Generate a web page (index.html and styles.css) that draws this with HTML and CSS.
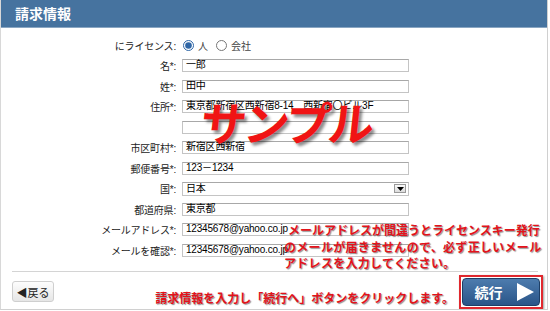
FILE: index.html
```html
<!DOCTYPE html>
<html lang="ja">
<head>
<meta charset="UTF-8" />
<title>請求情報</title>
<link rel="stylesheet" href="styles.css">
</head>
<body>
<div class="frame">
  <div class="head">請求情報</div>
  <div class="body">
    <div class="form">
      <div class="label">にライセンス:</div>
      <div class="radios">
        <label><input type="radio" name="who" checked> 人</label>
        <label><input type="radio" name="who"> 会社</label>
      </div>
      <div class="label">名*:</div>
      <div class="field">一郎</div>
      <div class="label">姓*:</div>
      <div class="field">田中</div>
      <div class="label">住所*:</div>
      <div class="field">東京都新宿区西新宿8-14　西新宿〇ビル3F</div>
      <div class="label"></div>
      <div class="field"></div>
      <div class="label">市区町村*:</div>
      <div class="field">新宿区西新宿</div>
      <div class="label">郵便番号*:</div>
      <div class="field">123－1234</div>
      <div class="label">国*:</div>
      <div class="field select">日本<span class="arrow"><svg width="7" height="4" viewBox="0 0 7 4"><polygon points="0,0 7,0 3.5,4" fill="#000"/></svg></span></div>
      <div class="label">都道府県:</div>
      <div class="field">東京都</div>
      <div class="label">メールアドレス*:</div>
      <div class="field">12345678@yahoo.co.jp</div>
      <div class="label">メールを確認*:</div>
      <div class="field">12345678@yahoo.co.jp</div>
    </div>
    <div class="sample">サンプル</div>
    <p class="note"><span class="first">メールアドレスが間違うとライセンスキー発行</span><br>のメールが届きませんので、必ず正しいメール<br>アドレスを入力してください。</p>
  </div>
  <div class="foot">
    <button class="back">◀戻る</button>
    <span class="hint">請求情報を入力し「続行へ」ボタンをクリックします。</span>
    <div class="mark">
      <button class="next">続行 <svg width="17" height="18" viewBox="0 0 17 18"><polygon points="0,0 17,9 0,18" fill="#fff"/></svg></button>
    </div>
  </div>
</div>
</body>
</html>
```
FILE: styles.css
```css
body {
  margin: 0;
  font-family: "Noto Sans CJK JP", "DejaVu Sans", sans-serif;
  background: #fff;
  color: #000;
}
.frame {
  width: 548px;
  height: 310px;
  border-right: 1px solid #d0d0d0;
  border-bottom: 1px solid #d0d0d0;
  border-left: 1px solid #d8d8d8;
  box-sizing: border-box;
  position: relative;
  overflow: hidden;
}
.head {
  margin-left: -1px;
  height: 27px;
  background: #46739f;
  border-bottom: 1px solid #8aa6c2;
  color: #fff;
  font-size: 14px;
  font-weight: bold;
  line-height: 27px;
  padding-left: 15px;
}
.body {
  position: relative;
  padding-top: 7px;
}
.form {
  display: grid;
  grid-template-columns: 175px 227px;
  grid-auto-rows: 20.5px;
  column-gap: 6px;
  align-items: center;
  font-family: "Liberation Sans", "Noto Sans CJK JP", sans-serif;
  font-size: 10px;
}
.label {
  text-align: right;
  color: #222;
  letter-spacing: -0.2px;
}
.radios {
  display: flex;
  gap: 8px;
  padding-left: 1px;
  color: #444;
}
.radios label {
  display: flex;
  align-items: center;
  gap: 4px;
}
.radios input {
  width: 11px;
  height: 11px;
  margin: 0;
  accent-color: #2f66a6;
}
.field {
  height: 13px;
  border: 1px solid #c4c4c4;
  border-top-color: #a8a8a8;
  box-sizing: border-box;
  padding-left: 3px;
  line-height: 10px;
  white-space: nowrap;
  letter-spacing: -0.2px;
}
.select {
  height: 14px;
  display: flex;
  justify-content: space-between;
  align-items: center;
  padding-right: 2px;
}
.arrow {
  width: 12px;
  height: 9px;
  border: 1px solid #999;
  background: linear-gradient(#fafafa, #dcdcdc);
  display: flex;
  align-items: center;
  justify-content: center;
  box-sizing: border-box;
}
.sample {
  position: absolute;
  left: 200px;
  top: 70px;
  font-size: 46px;
  font-weight: bold;
  color: #f01414;
  letter-spacing: -3px;
  transform: skewX(-6deg);
  text-shadow: 3px 3px 3px rgba(0, 0, 0, 0.45);
  line-height: 1;
}
.note {
  position: absolute;
  left: 283px;
  top: 194px;
  margin: 0;
  font-size: 12px;
  font-weight: bold;
  line-height: 16.5px;
  white-space: nowrap;
  color: #e3131b;
  text-shadow: 1px 1px 1px rgba(0, 0, 0, 0.45);
  letter-spacing: 0.3px;
}
.note .first {
  letter-spacing: 0;
  padding-left: 4px;
}
.foot {
  margin: 10px 9px 0 11px;
  border-top: 1px solid #d4d4d4;
  display: flex;
  align-items: center;
  height: 38px;
}
.back {
  width: 42px;
  height: 21px;
  margin-top: 2px;
  padding: 0;
  font-family: inherit;
  font-size: 11px;
  color: #222;
  border: 1px solid #cfcfcf;
  border-radius: 3px;
  background: linear-gradient(#fdfdfd, #e6e6e6);
}
.hint {
  margin-left: auto;
  margin-top: 14px;
  font-size: 12px;
  font-weight: bold;
  color: #e3131b;
  text-shadow: 1px 1px 1px rgba(0, 0, 0, 0.45);
  letter-spacing: 0;
}
.mark {
  margin-left: 5px;
  margin-right: -5px;
  margin-top: 2px;
  border: 2px solid #e0282e;
  padding: 1px;
  box-shadow: 1px 1px 2px rgba(0, 0, 0, 0.4);
}
.next {
  width: 78px;
  height: 28px;
  padding: 0 0 0 6px;
  display: flex;
  align-items: center;
  justify-content: center;
  gap: 14px;
  font-family: inherit;
  font-size: 14px;
  font-weight: bold;
  color: #fff;
  border: 1px solid #1e3f66;
  border-radius: 4px;
  background: linear-gradient(#4d7cae, #2a5588);
}
```
